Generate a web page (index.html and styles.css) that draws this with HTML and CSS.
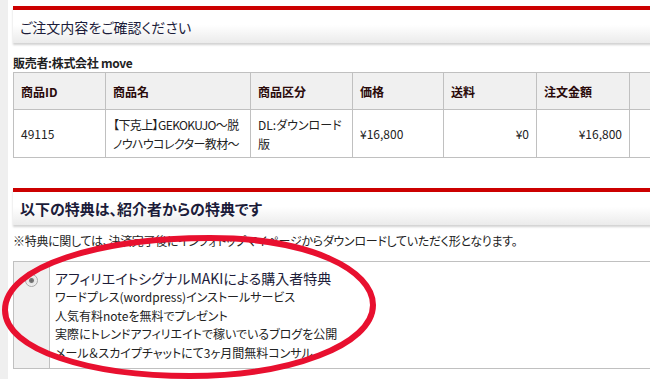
FILE: index.html
```html
<!DOCTYPE html>
<html lang="ja">
<head>
    <meta charset="UTF-8">
    <title>ご注文内容をご確認ください</title>
    <link rel="stylesheet" href="styles.css">
</head>
<body>
    <div class="page">
        <div class="sec-head">
            <h2 class="sec-title">ご注文内容をご確認ください</h2>
        </div>

        <p class="seller">販売者:株式会社 move</p>

        <table class="order">
            <tr>
                <th class="c-id">商品ID</th>
                <th class="c-name">商品名</th>
                <th class="c-kind">商品区分</th>
                <th class="c-price">価格</th>
                <th class="c-ship">送料</th>
                <th class="c-total">注文金額</th>
                <th class="c-more"></th>
            </tr>
            <tr>
                <td>49115</td>
                <td class="tight">【下克上】GEKOKUJO～脱<br>ノウハウコレクター教材～</td>
                <td>DL:ダウンロード<br>版</td>
                <td>¥16,800</td>
                <td class="num">¥0</td>
                <td class="num">¥16,800</td>
                <td></td>
            </tr>
        </table>

        <div class="sec-head sec-head-2">
            <h2 class="sec-title bold">以下の特典は、紹介者からの特典です</h2>
        </div>

        <p class="note">※特典に関しては、決済完了後にインフォトップマイページからダウンロードしていただく形となります。</p>

        <table class="bonus">
            <tr>
                <td class="pick"><span class="radio"></span></td>
                <td class="bonus-body">
                    <div class="bonus-title">アフィリエイトシグナルMAKIによる購入者特典</div>
                    <div class="bonus-line">ワードプレス(wordpress)インストールサービス</div>
                    <div class="bonus-line">人気有料noteを無料でプレゼント</div>
                    <div class="bonus-line">実際にトレンドアフィリエイトで稼いでいるブログを公開</div>
                    <div class="bonus-line">メール＆スカイプチャットにて3ヶ月間無料コンサル</div>
                </td>
            </tr>
        </table>
    </div>

    <!-- hand drawn marker on top of the screenshot -->
    <svg class="marker" width="650" height="379" viewBox="0 0 650 379">
        <path d="M5 310 C5 266 100 238 210 238 C310 238 373 270 373 305 C373 345 290 376 190 376 C90 376 5 350 5 310 Z"
              fill="none" stroke="#e8102f" stroke-width="6"/>
    </svg>
</body>
</html>
```

FILE: styles.css
```css
body {
    margin: 0;
    background: #efefef;
    font-family: "Noto Sans CJK JP", "Noto Sans", sans-serif;
    font-feature-settings: "palt";
    color: #222;
    font-size: 12px;
    overflow: hidden;
}

.page {
    margin-left: 8px;
    width: 760px;
    height: 379px;
    background: #fff;
    padding: 6px 0 0 5px;
    box-sizing: border-box;
}

.sec-head {
    border-top: 4px solid #cc0000;
    height: 33px;
    background: linear-gradient(#fff 45%, #ebebeb);
    box-shadow: 0 2px 2px rgba(0, 0, 0, 0.18);
    padding-left: 7px;
    display: flex;
    align-items: center;
}

.sec-title {
    margin: 0;
    font-size: 14px;
    line-height: 20px;
    font-weight: normal;
    color: #1c1c3a;
}

.sec-title.bold {
    font-size: 15px;
    font-weight: bold;
}

.seller {
    margin: 12px 0 0;
    font-weight: bold;
    line-height: 16px;
    letter-spacing: -0.3px;
}

.order {
    border-collapse: collapse;
    table-layout: fixed;
    margin-top: 1px;
}

.order th,
.order td {
    border: 1px solid #c0c0c0;
    padding: 0 7px;
    text-align: left;
    line-height: 19px;
    white-space: nowrap;
    overflow: hidden;
    box-sizing: border-box;
}

.order th {
    background: #f0f0f0;
    height: 37px;
    color: #2a0a0a;
}

.order td {
    height: 48px;
}

.order td.tight {
    letter-spacing: -0.6px;
}

.order td.num {
    text-align: right;
}

.c-id { width: 92px; }
.c-name { width: 145px; }
.c-kind { width: 102px; }
.c-price { width: 91px; }
.c-ship { width: 93px; }
.c-total { width: 93px; }
.c-more { width: 60px; }

.sec-head-2 {
    margin-top: 30px;
}

.note {
    margin: 9px 0 13px;
    line-height: 14px;
    letter-spacing: -0.3px;
}

.bonus {
    border-collapse: collapse;
    width: 700px;
}

.bonus td {
    border: 1px solid #c0c0c0;
    vertical-align: top;
}

.pick {
    width: 33px;
    background: #f0f0f0;
    text-align: center;
    padding-top: 11px;
}

.radio {
    display: inline-block;
    width: 11px;
    height: 11px;
    border: 1px solid #a8a8a8;
    border-radius: 50%;
    background: radial-gradient(circle, #666 0, #777 2px, #e6e6e6 3px, #f8f8f8 100%);
}

.bonus-body {
    padding: 7px 5px 6px;
}

.bonus-title {
    font-size: 14px;
    color: #1c1c3a;
    line-height: 19px;
}

.bonus-line {
    font-size: 12px;
    line-height: 18.5px;
}

.marker {
    position: absolute;
    top: 0;
    left: 0;
    pointer-events: none;
}
```
